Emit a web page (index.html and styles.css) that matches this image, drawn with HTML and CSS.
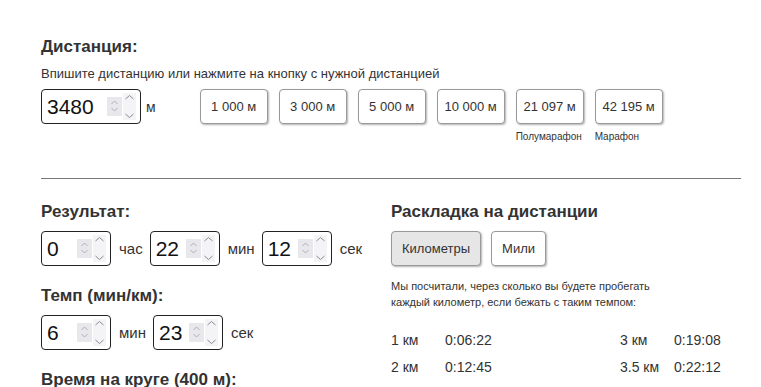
FILE: index.html
```html
<!DOCTYPE html>
<html lang="ru">
<head>
    <meta charset="UTF-8">
    <meta name="viewport" content="width=device-width, initial-scale=1.0">
    <title>Калькулятор темпа</title>
    <link rel="stylesheet" href="styles.css">
</head>
<body>
    <div class="calc">
        <!-- Дистанция -->
        <section class="distance">
            <h2>Дистанция:</h2>
            <p class="hint">Впишите дистанцию или нажмите на кнопку с нужной дистанцией</p>
            <div class="distance-row">
                <div class="field">
                    <div class="spin">
                        <input type="number" class="num num-wide" value="3480">
                        <svg class="arrows" width="30" height="27" viewBox="0 0 30 27"><rect x="0" y="4" width="15" height="19" fill="#e8e8ec"/><path d="M4.5 11 L7.5 8 L10.5 11 M4.5 15 L7.5 18 L10.5 15" fill="none" stroke="#b0b0b6"/><rect x="16" y="0" width="13" height="27" fill="#f4f4f6"/><path d="M18.5 6 L22.5 2.5 L26.5 6 M18.5 21 L22.5 24.5 L26.5 21" fill="none" stroke="#8a8a90"/></svg>
                    </div>
                    <span class="unit">м</span>
                </div>
                <div class="presets">
                    <div class="preset"><button class="btn">1 000 м</button></div>
                    <div class="preset"><button class="btn">3 000 м</button></div>
                    <div class="preset"><button class="btn">5 000 м</button></div>
                    <div class="preset"><button class="btn">10 000 м</button></div>
                    <div class="preset"><button class="btn">21 097 м</button><span class="note">Полумарафон</span></div>
                    <div class="preset"><button class="btn">42 195 м</button><span class="note">Марафон</span></div>
                </div>
            </div>
        </section>

        <hr>

        <div class="columns">
            <div class="left">
                <h2>Результат:</h2>
                <div class="field">
                    <div class="spin">
                        <input type="number" class="num" value="0">
                        <svg class="arrows" width="30" height="27" viewBox="0 0 30 27"><rect x="0" y="4" width="15" height="19" fill="#e8e8ec"/><path d="M4.5 11 L7.5 8 L10.5 11 M4.5 15 L7.5 18 L10.5 15" fill="none" stroke="#b0b0b6"/><rect x="16" y="0" width="13" height="27" fill="#f4f4f6"/><path d="M18.5 6 L22.5 2.5 L26.5 6 M18.5 21 L22.5 24.5 L26.5 21" fill="none" stroke="#8a8a90"/></svg>
                    </div>
                    <span class="unit">час</span>
                    <div class="spin">
                        <input type="number" class="num" value="22">
                        <svg class="arrows" width="30" height="27" viewBox="0 0 30 27"><rect x="0" y="4" width="15" height="19" fill="#e8e8ec"/><path d="M4.5 11 L7.5 8 L10.5 11 M4.5 15 L7.5 18 L10.5 15" fill="none" stroke="#b0b0b6"/><rect x="16" y="0" width="13" height="27" fill="#f4f4f6"/><path d="M18.5 6 L22.5 2.5 L26.5 6 M18.5 21 L22.5 24.5 L26.5 21" fill="none" stroke="#8a8a90"/></svg>
                    </div>
                    <span class="unit">мин</span>
                    <div class="spin">
                        <input type="number" class="num" value="12">
                        <svg class="arrows" width="30" height="27" viewBox="0 0 30 27"><rect x="0" y="4" width="15" height="19" fill="#e8e8ec"/><path d="M4.5 11 L7.5 8 L10.5 11 M4.5 15 L7.5 18 L10.5 15" fill="none" stroke="#b0b0b6"/><rect x="16" y="0" width="13" height="27" fill="#f4f4f6"/><path d="M18.5 6 L22.5 2.5 L26.5 6 M18.5 21 L22.5 24.5 L26.5 21" fill="none" stroke="#8a8a90"/></svg>
                    </div>
                    <span class="unit">сек</span>
                </div>

                <h2>Темп (мин/км):</h2>
                <div class="field">
                    <div class="spin">
                        <input type="number" class="num" value="6">
                        <svg class="arrows" width="30" height="27" viewBox="0 0 30 27"><rect x="0" y="4" width="15" height="19" fill="#e8e8ec"/><path d="M4.5 11 L7.5 8 L10.5 11 M4.5 15 L7.5 18 L10.5 15" fill="none" stroke="#b0b0b6"/><rect x="16" y="0" width="13" height="27" fill="#f4f4f6"/><path d="M18.5 6 L22.5 2.5 L26.5 6 M18.5 21 L22.5 24.5 L26.5 21" fill="none" stroke="#8a8a90"/></svg>
                    </div>
                    <span class="unit">мин</span>
                    <div class="spin">
                        <input type="number" class="num" value="23">
                        <svg class="arrows" width="30" height="27" viewBox="0 0 30 27"><rect x="0" y="4" width="15" height="19" fill="#e8e8ec"/><path d="M4.5 11 L7.5 8 L10.5 11 M4.5 15 L7.5 18 L10.5 15" fill="none" stroke="#b0b0b6"/><rect x="16" y="0" width="13" height="27" fill="#f4f4f6"/><path d="M18.5 6 L22.5 2.5 L26.5 6 M18.5 21 L22.5 24.5 L26.5 21" fill="none" stroke="#8a8a90"/></svg>
                    </div>
                    <span class="unit">сек</span>
                </div>

                <h2>Время на круге (400 м):</h2>
            </div>

            <div class="right">
                <h2>Раскладка на дистанции</h2>
                <div class="tabs">
                    <button class="btn tab active">Километры</button>
                    <button class="btn tab">Мили</button>
                </div>
                <p class="small">Мы посчитали, через сколько вы будете пробегать<br>каждый километр, если бежать с таким темпом:</p>
                <div class="splits">
                    <div class="split"><span class="km">1 км</span><span>0:06:22</span></div>
                    <div class="split"><span class="km">3 км</span><span>0:19:08</span></div>
                    <div class="split"><span class="km">2 км</span><span>0:12:45</span></div>
                    <div class="split"><span class="km">3.5 км</span><span>0:22:12</span></div>
                </div>
            </div>
        </div>
    </div>
</body>
</html>
```

FILE: styles.css
```css
body {
    margin: 0;
    font-family: "Liberation Sans", Arial, sans-serif;
    color: #333;
    background: #fff;
}
.calc {
    padding: 37px 20px 0 41px;
}
h2 {
    font-size: 17px;
    font-weight: bold;
    margin: 0 0 10px 0;
    line-height: 19px;
}
.hint {
    font-size: 13px;
    margin: 0 0 7px 0;
    line-height: 16px;
}
.distance-row {
    display: flex;
    align-items: flex-start;
}
.field {
    display: flex;
    align-items: center;
    height: 35px;
    margin-bottom: 20px;
}
.spin {
    position: relative;
    display: flex;
}
.num {
    width: 70px;
    height: 35px;
    box-sizing: border-box;
    border: 1px solid #222;
    border-radius: 4px;
    padding: 0 4px 0 5px;
    font-family: "Liberation Sans", Arial, sans-serif;
    font-size: 21px;
    color: #111;
}
.num::-webkit-inner-spin-button,
.num::-webkit-outer-spin-button {
    -webkit-appearance: none;
    margin: 0;
}
.arrows {
    position: absolute;
    right: 4px;
    top: 4px;
}
.num-wide {
    width: 100px;
}
.unit {
    font-size: 15px;
    margin: 0 7px 0 8px;
}
.distance-row .unit {
    font-size: 14px;
    margin: 0 0 0 5px;
}
.presets {
    display: flex;
    gap: 11px;
    margin-left: 44px;
}
.preset {
    display: flex;
    flex-direction: column;
    width: 68px;
}
.btn {
    height: 35px;
    box-sizing: border-box;
    background: #fff;
    border: 1px solid #999;
    border-radius: 4px;
    box-shadow: 1px 1px 2px rgba(0, 0, 0, 0.3);
    font-family: "Liberation Sans", Arial, sans-serif;
    font-size: 13px;
    color: #333;
    padding: 0;
    cursor: pointer;
}
.note {
    font-size: 10px;
    margin-top: 7px;
    white-space: nowrap;
}
hr {
    border: none;
    border-top: 1px solid #777;
    margin: 34px 0 23px 0;
}
.columns {
    display: flex;
}
.left {
    width: 350px;
}
.right {
    flex: 1;
}
.tabs {
    display: flex;
    gap: 10px;
}
.tab {
    padding: 0 10px;
}
.tab.active {
    background: #e6e6e6;
}
.small {
    font-size: 11px;
    line-height: 16px;
    margin: 12px 0 22px 0;
}
.splits {
    display: grid;
    grid-template-columns: 229px auto;
    row-gap: 11px;
    font-size: 14px;
    line-height: 16px;
}
.km {
    display: inline-block;
    width: 54px;
}
```
